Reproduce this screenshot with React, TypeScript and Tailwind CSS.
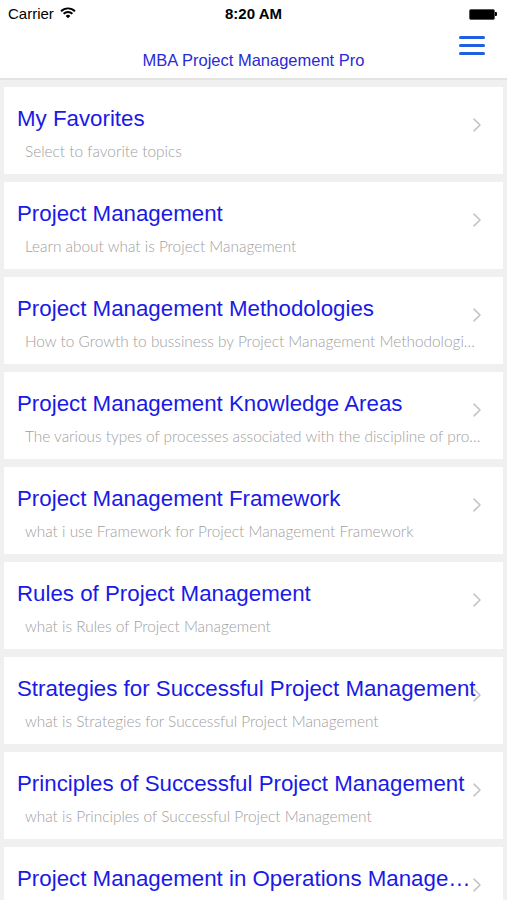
import React from "react";

const items = [
  { t: "My Favorites", s: "Select to favorite topics" },
  { t: "Project Management", s: "Learn about what is Project Management" },
  { t: "Project Management Methodologies", s: "How to Growth to bussiness by Project Management Methodologies and tools" },
  { t: "Project Management Knowledge Areas", s: "The various types of processes associated with the discipline of project management" },
  { t: "Project Management Framework", s: "what i use Framework for Project Management Framework" },
  { t: "Rules of Project Management", s: "what is Rules of Project Management" },
  { t: "Strategies for Successful Project Management", s: "what is Strategies for Successful Project Management" },
  { t: "Principles of Successful Project Management", s: "what is Principles of Successful Project Management" },
  { t: "Project Management in Operations Management", s: "what is Project Management in Operations Management" },
];

function Chevron() {
  return (
    <svg width="10" height="14" viewBox="0 0 10 14" className="absolute right-[21px] top-[31px]">
      <path d="M2 1.2 L8 7 L2 12.8" fill="none" stroke="#c4c4c8" strokeWidth="1.6" strokeLinecap="round" strokeLinejoin="round" />
    </svg>
  );
}

export default function App() {
  return (
    <div className="w-[507px] h-[900px] overflow-hidden bg-[#f0f0f0]" style={{ fontFamily: "'Liberation Sans', Arial, sans-serif" }}>
      <div className="bg-white border-b-[2px] border-[#e3e3e3]">
        <div className="h-[28px] relative flex items-center px-[8px] text-[15px] text-black">
          <span>Carrier</span>
          <svg width="16" height="12" viewBox="0 0 16 12" className="ml-[6px] mt-[-3px]">
            <path d="M1 4.2 A10 10 0 0 1 15 4.2" fill="none" stroke="#000" strokeWidth="1.9" />
            <path d="M3.6 6.8 A6.3 6.3 0 0 1 12.4 6.8" fill="none" stroke="#000" strokeWidth="1.9" />
            <path d="M8 11.2 L5.6 8.9 A3.4 3.4 0 0 1 10.4 8.9 Z" fill="#000" />
          </svg>
          <span className="absolute left-0 right-0 text-center font-bold text-[15px]">8:20 AM</span>
          <div className="ml-auto flex items-center mr-[2px]">
            <div className="w-[26px] h-[11px] bg-black rounded-[2px] border border-[#555]" />
            <div className="w-[2px] h-[4px] bg-black rounded-r-[1px]" />
          </div>
        </div>
        <div className="h-[50px] relative">
          <div className="absolute left-0 right-0 top-[20px] text-center text-[16.5px] text-[#2a2ad6]">MBA Project Management Pro</div>
          <div className="absolute left-[459px] top-[8px] w-[26px] flex flex-col gap-[5.5px]">
            <div className="h-[2.5px] bg-[#1f5fe0] rounded" />
            <div className="h-[2.5px] bg-[#1f5fe0] rounded" />
            <div className="h-[2.5px] bg-[#1f5fe0] rounded" />
          </div>
        </div>
      </div>
      <div className="px-[4px] pt-[7px] flex flex-col gap-[8px]">
        {items.map((it, i) => (
          <div key={i} className="relative bg-white h-[87px] pl-[13px]">
            <div className="pt-[18px] pr-[24px] text-[22.3px] leading-[28px] text-[#1a1ae6] whitespace-nowrap overflow-hidden text-ellipsis">
              {it.t}
            </div>
            <div
              className="mt-[8px] ml-[8px] pr-[20px] text-[15.4px] leading-[20px] text-[#a0a0a0] whitespace-nowrap overflow-hidden text-ellipsis font-light"
              style={{ fontFamily: "Lato, 'Open Sans', sans-serif" }}
            >
              {it.s}
            </div>
            <Chevron />
          </div>
        ))}
      </div>
    </div>
  );
}
